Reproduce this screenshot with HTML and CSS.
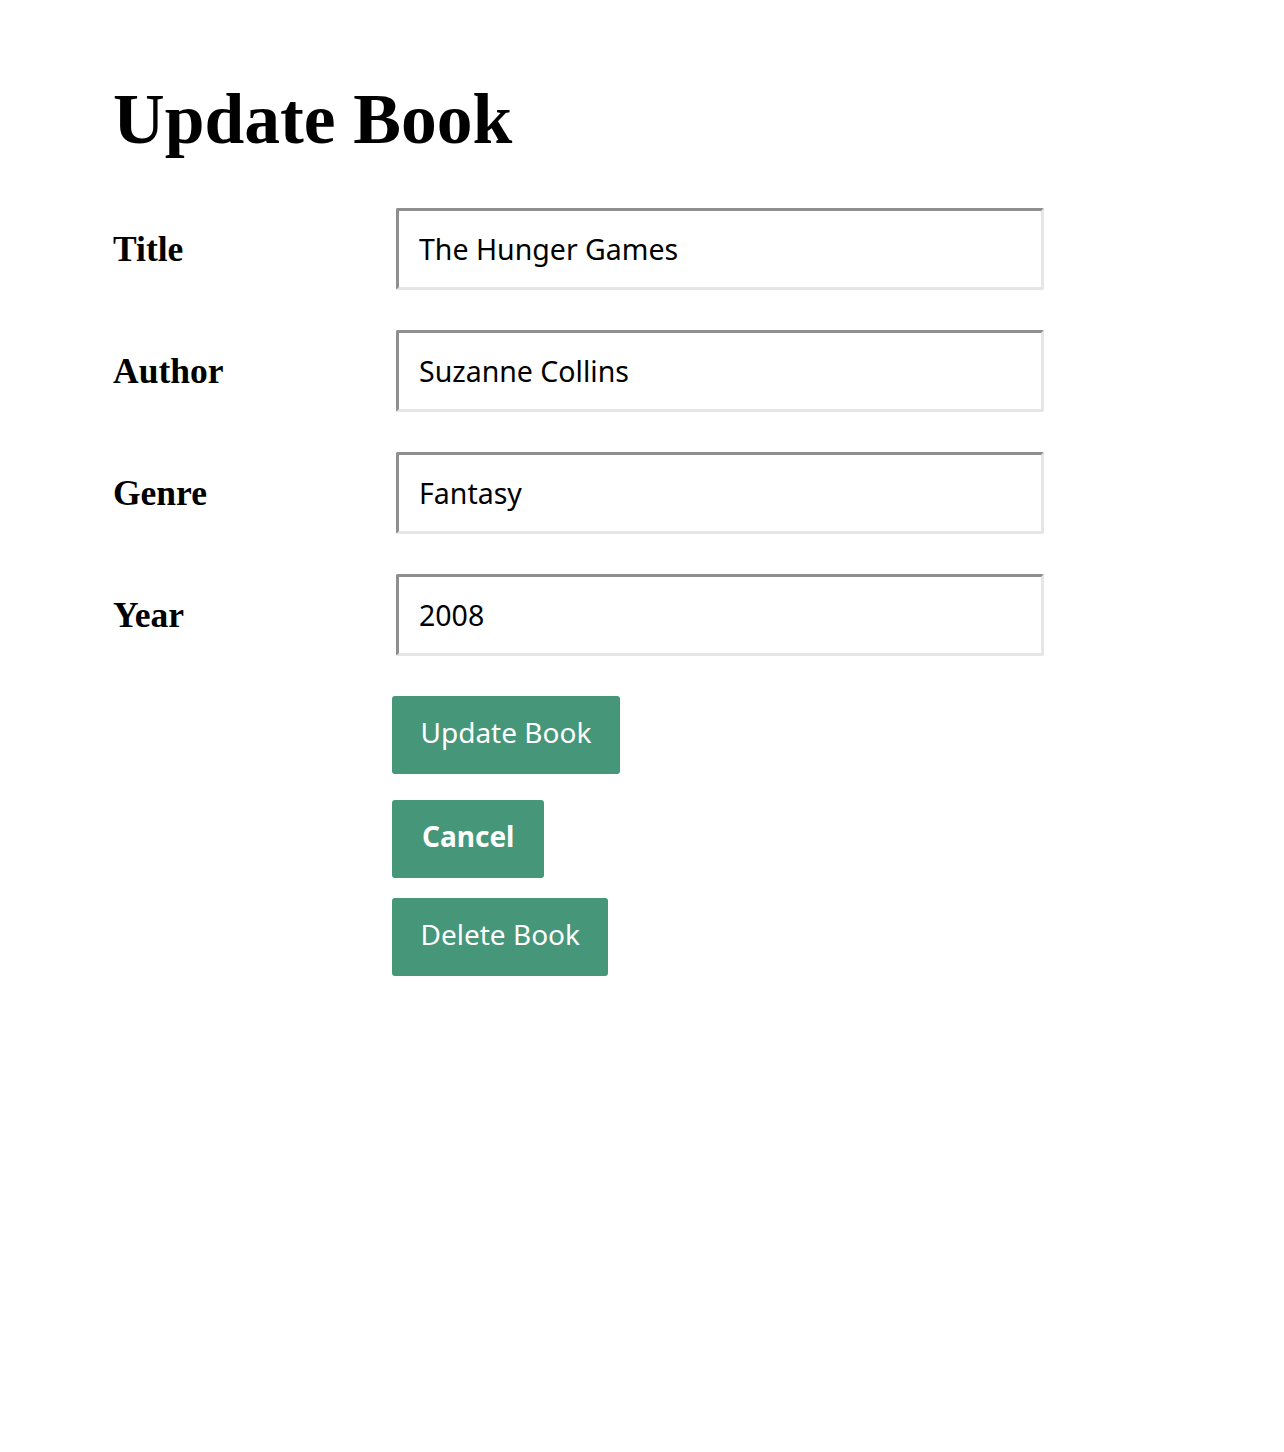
FILE: index.html
```html
<!DOCTYPE html>
<html lang="en">
<head>
<meta charset="utf-8">
<title>Update Book</title>
<link rel="stylesheet" href="styles.css">
</head>
<body>
<main class="page">
  <h1 class="page-title">Update Book</h1>
  <form class="book-form">
    <div class="field-row">
      <label class="field-label" for="title">Title</label>
      <input class="field-input" id="title" type="text" value="The Hunger Games">
    </div>
    <div class="field-row">
      <label class="field-label" for="author">Author</label>
      <input class="field-input" id="author" type="text" value="Suzanne Collins">
    </div>
    <div class="field-row">
      <label class="field-label" for="genre">Genre</label>
      <input class="field-input" id="genre" type="text" value="Fantasy">
    </div>
    <div class="field-row">
      <label class="field-label" for="year">Year</label>
      <input class="field-input" id="year" type="text" value="2008">
    </div>
    <div class="actions">
      <button class="btn btn-update" type="button">Update Book</button>
      <button class="btn btn-cancel" type="button">Cancel</button>
      <button class="btn btn-delete" type="button">Delete Book</button>
    </div>
  </form>
</main>
</body>
</html>
```
FILE: styles.css
```css
html, body {
  margin: 0;
  padding: 0;
  background: #ffffff;
}

body {
  font-family: "Liberation Serif", "Times New Roman", serif;
  color: #000;
}

.page {
  padding: 78px 0 0 113px;
}

.page-title {
  margin: 0 0 48px 0;
  font-size: 71.5px;
  font-weight: bold;
  line-height: 82px;
}

.book-form {
  display: flex;
  flex-direction: column;
}

.field-row {
  display: grid;
  grid-template-columns: 279px 652px;
  align-items: center;
  margin-bottom: 40px;
}

.field-label {
  font-size: 35.5px;
  font-weight: bold;
  line-height: normal;
}

.field-input {
  margin-left: 4px;
  width: 648px;
  height: 82px;
  box-sizing: border-box;
  padding: 0 20px;
  border-style: solid;
  border-width: 3px;
  border-color: #8f8f8f #e6e6e6 #e6e6e6 #8f8f8f;
  border-radius: 2px;
  font-family: "Noto Sans", "DejaVu Sans", sans-serif;
  font-size: 28.5px;
  color: #000;
  background: #fff;
  outline: none;
}

.actions {
  display: flex;
  flex-direction: column;
  align-items: flex-start;
  padding-left: 279px;
}

.btn {
  height: 78px;
  box-sizing: border-box;
  padding: 0 28.5px 6px 28.5px;
  line-height: 72px;
  border: none;
  border-radius: 3px;
  background: #469679;
  color: #ffffff;
  font-family: "Noto Sans", "DejaVu Sans", sans-serif;
  font-size: 28px;
  font-weight: normal;
  cursor: pointer;
}

.btn-cancel {
  margin-top: 26px;
  padding-left: 30px;
  padding-right: 30px;
  font-weight: bold;
}

.btn-delete {
  margin-top: 20px;
}
```
